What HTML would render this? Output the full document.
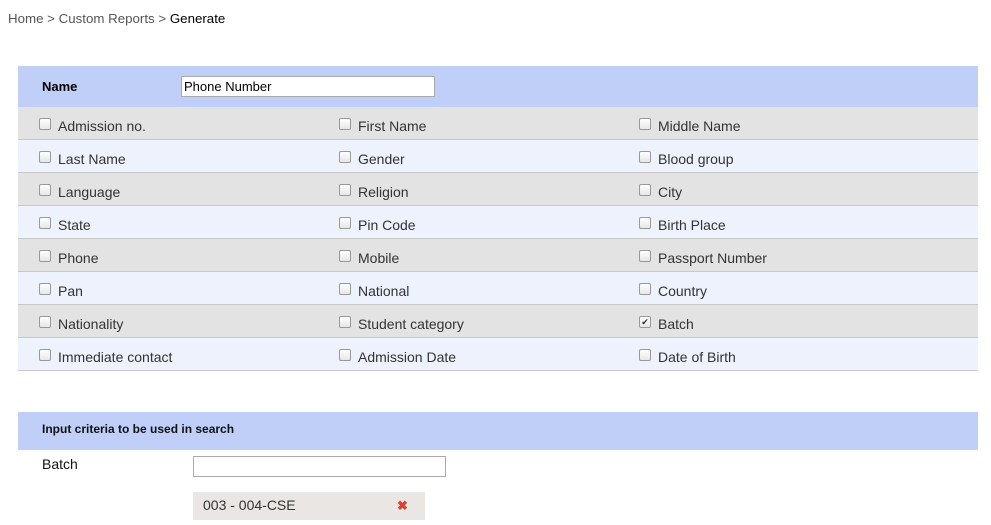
<!DOCTYPE html>
<html><head><style>
body{margin:0;background:#fff;font-family:"Liberation Sans",sans-serif;width:991px;height:525px;overflow:hidden;position:relative}
.a{position:absolute}
.bc{left:8px;top:11px;font-size:13.3px;color:#555}
.bc b{font-weight:normal;color:#000}
.hdr{left:18px;width:960px;background:#bfcff8}
.row{position:absolute;left:18px;width:960px;height:32px;border-bottom:1px solid #c8c8c8}
.g{background:#e3e3e3}.l{background:#edf2fd}
.c{position:absolute;top:11px;font-size:14px;color:#333}
.c i{position:absolute;left:-19px;top:0px;width:10px;height:10px;border:1px solid #999;border-radius:2px;background:linear-gradient(#fff,#e6e6e6)}
</style></head><body>
<div class="a bc">Home &gt; Custom Reports &gt; <b>Generate</b></div>
<div class="a hdr" style="top:66px;height:41px"></div>
<div class="a" style="left:42px;top:79px;font-size:13px;font-weight:bold">Name</div>
<div class="a" style="left:181px;top:76px;width:250px;height:19px;border:1px solid #aaa;background:#fff;font-size:13px;line-height:19px;padding-left:2px;box-sizing:content-box">Phone Number</div>

<div class="row g" style="top:107px"><span class="c" style="left:40px"><i></i>Admission no.</span><span class="c" style="left:340px"><i></i>First Name</span><span class="c" style="left:640px"><i></i>Middle Name</span></div>
<div class="row l" style="top:140px"><span class="c" style="left:40px"><i></i>Last Name</span><span class="c" style="left:340px"><i></i>Gender</span><span class="c" style="left:640px"><i></i>Blood group</span></div>
<div class="row g" style="top:173px"><span class="c" style="left:40px"><i></i>Language</span><span class="c" style="left:340px"><i></i>Religion</span><span class="c" style="left:640px"><i></i>City</span></div>
<div class="row l" style="top:206px"><span class="c" style="left:40px"><i></i>State</span><span class="c" style="left:340px"><i></i>Pin Code</span><span class="c" style="left:640px"><i></i>Birth Place</span></div>
<div class="row g" style="top:239px"><span class="c" style="left:40px"><i></i>Phone</span><span class="c" style="left:340px"><i></i>Mobile</span><span class="c" style="left:640px"><i></i>Passport Number</span></div>
<div class="row l" style="top:272px"><span class="c" style="left:40px"><i></i>Pan</span><span class="c" style="left:340px"><i></i>National</span><span class="c" style="left:640px"><i></i>Country</span></div>
<div class="row g" style="top:305px"><span class="c" style="left:40px"><i></i>Nationality</span><span class="c" style="left:340px"><i></i>Student category</span><span class="c" style="left:640px"><i style="font-style:normal;font-size:9px;line-height:10px;text-align:center;color:#333">✔</i>Batch</span></div>
<div class="row l" style="top:338px"><span class="c" style="left:40px"><i></i>Immediate contact</span><span class="c" style="left:340px"><i></i>Admission Date</span><span class="c" style="left:640px"><i></i>Date of Birth</span></div>

<div class="a hdr" style="top:412px;height:38px"></div>
<div class="a" style="left:42px;top:422px;font-size:12px;font-weight:bold;color:#111">Input criteria to be used in search</div>
<div class="a" style="left:42px;top:456px;font-size:14px;color:#111">Batch</div>
<div class="a" style="left:193px;top:456px;width:251px;height:19px;border:1px solid #aaa;background:#fff"></div>
<div class="a" style="left:193px;top:492px;width:232px;height:28px;background:#e9e6e3"></div>
<div class="a" style="left:203px;top:497px;font-size:14px;color:#333">003 - 004-CSE</div>
<div class="a" style="left:397px;top:498px;font-size:13px;color:#e04030;font-weight:bold">✖</div>
</body></html>
